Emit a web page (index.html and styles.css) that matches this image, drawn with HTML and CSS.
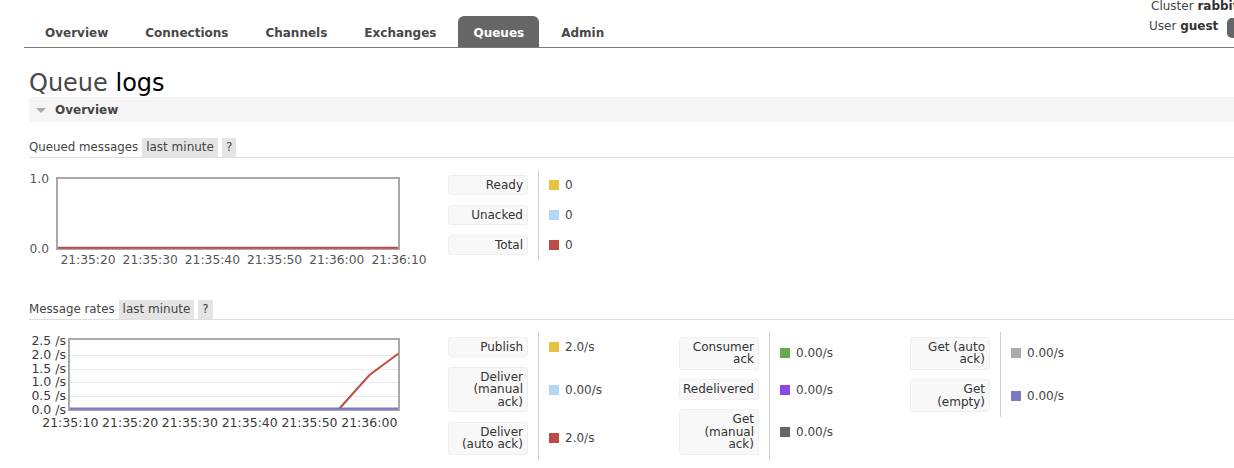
FILE: index.html
```html
<!DOCTYPE html>
<html lang="en">
<head>
<meta charset="utf-8">
<title>RabbitMQ Management - Queue logs</title>
<link rel="stylesheet" href="styles.css">
</head>
<body>
<div class="page">
  <header class="topbar">
    <nav class="tabs">
      <a class="tab">Overview</a>
      <a class="tab">Connections</a>
      <a class="tab">Channels</a>
      <a class="tab">Exchanges</a>
      <a class="tab active">Queues</a>
      <a class="tab">Admin</a>
    </nav>
    <div class="login">
      <div class="login-cluster">Cluster <b>rabbit@my-rabbit</b></div>
      <div class="login-user"><span class="login-text">User <b>guest</b></span><span class="logout">Log out</span></div>
    </div>
  </header>

  <main class="content">
    <h1 class="title">Queue <b>logs</b></h1>

    <section class="panel">
      <div class="panel-head"><span class="tri"></span>Overview</div>

      <div class="subhead"><span class="subhead-text">Queued messages</span><span class="chip">last minute</span><span class="chip">?</span></div>
      <div class="chart-row">
        <svg class="chart" width="419" height="100" viewBox="0 0 419 100">
          <rect x="28" y="8" width="342" height="71" fill="#fff" stroke="#a9a9a9" stroke-width="2"/>
          <line x1="29" y1="77.8" x2="369" y2="77.8" stroke="#bd4b45" stroke-width="2"/>
          <g class="ylab1" text-anchor="end">
            <text x="20" y="12.7">1.0</text>
            <text x="20" y="83.3">0.0</text>
          </g>
          <g class="xlab1" text-anchor="middle">
            <text x="59" y="94">21:35:20</text>
            <text x="121.2" y="94">21:35:30</text>
            <text x="183.4" y="94">21:35:40</text>
            <text x="245.6" y="94">21:35:50</text>
            <text x="307.8" y="94">21:36:00</text>
            <text x="370" y="94">21:36:10</text>
          </g>
        </svg>
        <div class="legends">
          <div class="legend">
            <div class="lbl">Ready</div><div class="val"><span class="sw" style="background:#e6c244"></span>0</div>
            <div class="lbl">Unacked</div><div class="val"><span class="sw" style="background:#b5d7f6"></span>0</div>
            <div class="lbl">Total</div><div class="val"><span class="sw" style="background:#bd4b45"></span>0</div>
          </div>
        </div>
      </div>

      <div class="subhead second"><span class="subhead-text">Message rates</span><span class="chip">last minute</span><span class="chip">?</span></div>
      <div class="chart-row">
        <svg class="chart" width="419" height="100" viewBox="0 0 419 100">
          <rect x="40" y="7" width="330" height="71" fill="#fff" stroke="#a9a9a9" stroke-width="2"/>
          <g stroke="#e9e9e9" stroke-width="1">
            <line x1="41" y1="23.5" x2="369" y2="23.5"/>
            <line x1="41" y1="37.5" x2="369" y2="37.5"/>
            <line x1="41" y1="50.5" x2="369" y2="50.5"/>
            <line x1="41" y1="64.5" x2="369" y2="64.5"/>
          </g>
          <polyline points="310,77 340.5,43 369.5,21.5" fill="none" stroke="#c14b41" stroke-width="2"/>
          <line x1="41" y1="76.6" x2="369" y2="76.6" stroke="#7c79c3" stroke-width="2.4"/>
          <g class="ylab2" text-anchor="end">
            <text x="37" y="13">2.5 /s</text>
            <text x="37" y="26.8">2.0 /s</text>
            <text x="37" y="40.6">1.5 /s</text>
            <text x="37" y="54.4">1.0 /s</text>
            <text x="37" y="68.2">0.5 /s</text>
            <text x="37" y="82">0.0 /s</text>
          </g>
          <g class="xlab2" text-anchor="middle">
            <text x="41.3" y="95.3">21:35:10</text>
            <text x="101.1" y="95.3">21:35:20</text>
            <text x="160.9" y="95.3">21:35:30</text>
            <text x="220.7" y="95.3">21:35:40</text>
            <text x="280.5" y="95.3">21:35:50</text>
            <text x="340.3" y="95.3">21:36:00</text>
          </g>
        </svg>
        <div class="legends">
          <div class="legend">
            <div class="lbl">Publish</div><div class="val"><span class="sw" style="background:#e6c244"></span>2.0/s</div>
            <div class="lbl">Deliver<br>(manual<br>ack)</div><div class="val"><span class="sw" style="background:#b5d7f6"></span>0.00/s</div>
            <div class="lbl">Deliver<br>(auto ack)</div><div class="val"><span class="sw" style="background:#bd4b45"></span>2.0/s</div>
          </div>
          <div class="legend">
            <div class="lbl">Consumer<br>ack</div><div class="val"><span class="sw" style="background:#65a84d"></span>0.00/s</div>
            <div class="lbl">Redelivered</div><div class="val"><span class="sw" style="background:#8d46e8"></span>0.00/s</div>
            <div class="lbl">Get<br>(manual<br>ack)</div><div class="val"><span class="sw" style="background:#666666"></span>0.00/s</div>
          </div>
          <div class="legend">
            <div class="lbl">Get (auto<br>ack)</div><div class="val"><span class="sw" style="background:#aaaaaa"></span>0.00/s</div>
            <div class="lbl">Get<br>(empty)</div><div class="val"><span class="sw" style="background:#7c79c3"></span>0.00/s</div>
          </div>
        </div>
      </div>
    </section>
  </main>
</div>
</body>
</html>
```

FILE: styles.css
```css
html, body {
  margin: 0;
  padding: 0;
  overflow: hidden;
  background: #fff;
}

body {
  font-family: "DejaVu Sans", Verdana, sans-serif;
  font-size: 12px;
  color: #484848;
}

.page {
  width: 1234px;
}

/* ---------- top bar ---------- */
.topbar {
  display: flex;
  margin-left: 24px;
  height: 47px;
  border-bottom: 1px solid #7a7a7a;
}

.tabs {
  flex: 1;
  min-width: 0;
  display: flex;
  align-items: flex-end;
  gap: 7px;
  padding-left: 6px;
}

.tab {
  height: 28px;
  padding: 3px 15px 0;
  line-height: 28px;
  font-weight: bold;
  color: #484848;
  border-radius: 6px 6px 0 0;
  white-space: nowrap;
}

.tab.active {
  background: #666;
  color: #fff;
}

.login {
  flex: 0 0 85px;
  width: 85px;
  min-width: 0;
  white-space: nowrap;
  color: #444;
}

.login b {
  color: #333;
}

.login-cluster {
  height: 12px;
  line-height: 12px;
  margin-left: 2px;
}

.login-user {
  display: flex;
  align-items: flex-start;
  margin-top: 6px;
}

.login-text {
  line-height: 14px;
  margin-top: 1px;
}

.logout {
  flex: none;
  height: 20px;
  line-height: 20px;
  margin-left: 9px;
  padding: 0 8px;
  background: #666;
  color: #fff;
  border-radius: 5px;
}

/* ---------- content ---------- */
.content {
  padding-left: 29px;
}

.title {
  margin: 22px 0 0;
  font-size: 24px;
  line-height: 27px;
  font-weight: normal;
  color: #484848;
}

.title b {
  font-weight: normal;
  color: #000;
}

.panel-head {
  height: 25px;
  display: flex;
  align-items: center;
  padding-left: 7px;
  background: #f5f5f5;
  font-weight: bold;
  color: #444;
}

.tri {
  width: 0;
  height: 0;
  border-left: 5px solid transparent;
  border-right: 5px solid transparent;
  border-top: 5px solid #a8a8a8;
  margin: 1px 9px 0 0;
}

.subhead {
  display: flex;
  height: 19px;
  line-height: 18.5px;
  margin-top: 16px;
  border-bottom: 1px solid #dedede;
  color: #444;
}

.subhead.second {
  margin-top: 30px;
}

.subhead-text {
  font-size: 11.8px;
}

.chip {
  margin-left: 4px;
  padding: 0 4px;
  background: #e4e4e4;
  color: #444;
}

.chart-row {
  display: flex;
  margin-top: 12px;
}

.chart {
  display: block;
  flex: none;
  font-family: "DejaVu Sans", Verdana, sans-serif;
}

.ylab1, .xlab1 {
  font-size: 12.3px;
  fill: #555;
}

.ylab2, .xlab2 {
  font-size: 12.5px;
  fill: #3a3a3a;
}

/* ---------- legends ---------- */
.legends {
  display: flex;
}

.legend {
  width: 231px;
  display: grid;
  grid-template-columns: 90px 1fr;
  align-content: start;
}

.lbl {
  margin: 4.75px 10px 4.75px 0;
  padding: 3px 4px 3px 2px;
  line-height: 12.5px;
  text-align: right;
  background: #f8f8f8;
  border: 1px solid #efefef;
  border-radius: 3px;
  color: #333;
  white-space: nowrap;
}

.val {
  display: flex;
  align-items: center;
  padding-left: 10px;
  border-left: 1px solid #cfcfcf;
  color: #444;
}

.sw {
  width: 10px;
  height: 10px;
  margin-right: 6px;
  flex: none;
}
```
